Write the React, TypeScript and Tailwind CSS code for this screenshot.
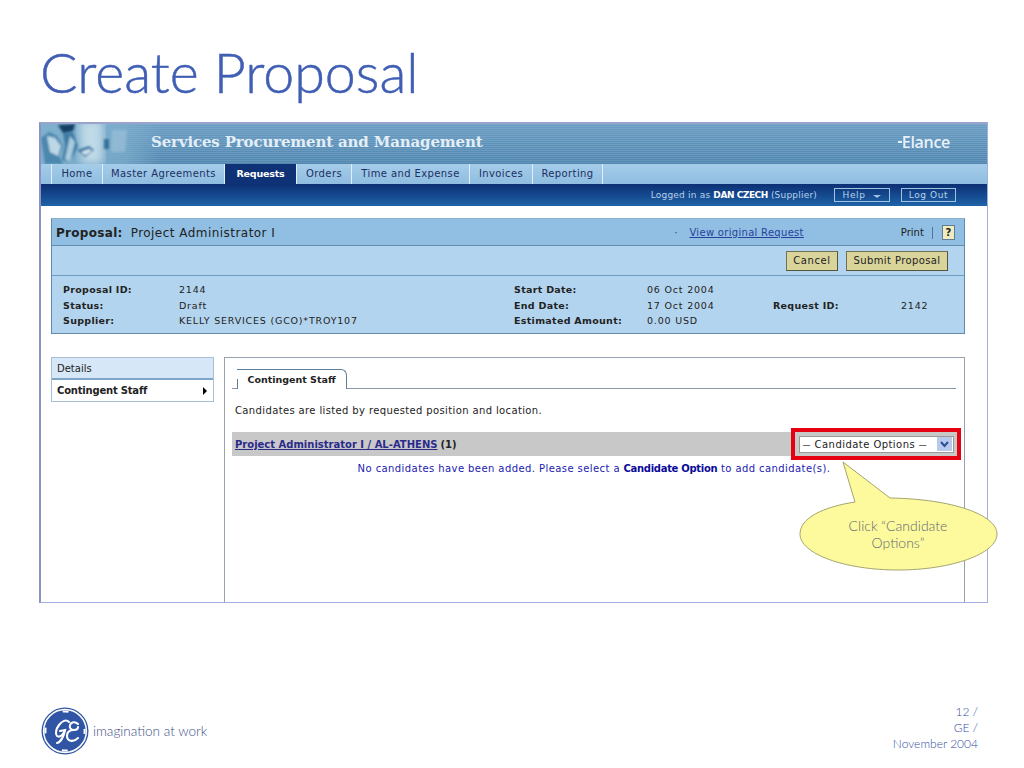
const verdana = "font-['DejaVu_Sans',sans-serif]";

const tabs = [
  { label: "Home", width: "w-[51px]" },
  { label: "Master Agreements", width: "w-[122px]" },
  { label: "Requests", width: "w-[72px]", active: true },
  { label: "Orders", width: "w-[55px]" },
  { label: "Time and Expense", width: "w-[118px]" },
  { label: "Invoices", width: "w-[63px]" },
  { label: "Reporting", width: "w-[70px]" },
];

const BannerPhoto = () => (
  <svg className="absolute left-0 top-0" width="120" height="40" viewBox="0 0 120 40">
    <defs>
      <filter id="soft">
        <feGaussianBlur stdDeviation="1" />
      </filter>
      <filter id="softer">
        <feGaussianBlur stdDeviation="4" />
      </filter>
      <linearGradient id="fade" x1="0" x2="1" y1="0" y2="0">
        <stop offset="0" stopColor="#7fb0cd" />
        <stop offset="0.7" stopColor="#7fb0cd" stopOpacity="0.7" />
        <stop offset="1" stopColor="#7fb0cd" stopOpacity="0" />
      </linearGradient>
    </defs>
    <rect width="120" height="40" fill="url(#fade)" />
    <path d="M38 -4h24v44H40z" fill="#c0dae8" filter="url(#softer)" />
    <g filter="url(#soft)">
      <path d="M0 14l8-6 8 4 6 10-4 10 4 8H4z" fill="#3f7da6" opacity="0.8" />
      <path d="M6 12l8 2 6 8-3 10-8-4z" fill="#bcd8e6" />
      <path d="M17 1l17-1-2 7-10 2z" fill="#123f63" />
      <path d="M22 9l10-1 5 14-8 16-8-2 3-14z" fill="#3f7da6" />
      <path d="M29 12l5 6-5 20-5-3z" fill="#a9cbdf" />
      <path d="M36 26l12-4 5 4-9 7z" fill="#3f7da6" />
      <path d="M40 28l8-3 3 2-7 4z" fill="#d5e6f0" />
      <path d="M63 15h5v10h-5z" fill="#34729c" />
      <path d="M71 6h15l-2 22H70z" fill="#a3c5dc" opacity="0.55" />
    </g>
  </svg>
);

const GeLogo = () => (
  <svg width="48" height="48" viewBox="0 0 48 48">
    <circle cx="24" cy="24" r="23.5" fill="#2f55a4" />
    <circle cx="24" cy="24" r="21.4" fill="none" stroke="#fff" strokeWidth="1.5" />
    <circle cx="24" cy="24" r="19.6" fill="none" stroke="#fff" strokeWidth="2" strokeDasharray="6 24.8" strokeDashoffset="3" />
    <g fill="none" stroke="#fff" strokeWidth="2.1" strokeLinecap="round">
      <path d="M28 15C25 12 21 14 18 18C15 22 14 27 16 29C19 31 23 27 24 23L19 24" />
      <path d="M24 23C23 29 20 35 16 36" />
      <path d="M37 17C34 14 30 15 29 18C28 21 30 23 33 23C29 23 26 25 26 29C26 34 32 36 37 31" />
      <path d="M33 23C35 23 37 22 37 20" />
    </g>
  </svg>
);

const Detail = ({ label, value }: { label: string; value: string }) => (
  <>
    <span className="font-bold">{label}</span>
    <span className="tracking-[0.8px]">{value}</span>
  </>
);

export default function App() {
  return (
    <div className="relative flex h-[768px] w-[1024px] flex-col overflow-hidden bg-white">
      <h1 className="ml-[40px] mt-[38px] h-[84px] font-['Lato',sans-serif] text-[55.5px] font-light leading-[68px] text-[#3f5eb4] [-webkit-text-stroke:0.5px_#3f5eb4]">
        Create Proposal
      </h1>

      {/* Screenshot frame */}
      <div className={`ml-[39px] flex h-[481px] w-[949px] flex-col border-b border-l-[2px] border-r border-t-[2px] border-[#a3aede] border-l-[#8c93c4] border-t-[#9aa3cc] text-[10px] leading-[14px] text-[#222] ${verdana}`}>
        <div className="relative flex h-[40px] shrink-0 items-center bg-[repeating-linear-gradient(180deg,rgba(255,255,255,0.12)_0px,rgba(255,255,255,0.12)_1px,transparent_1px,transparent_2px),linear-gradient(180deg,#6a9dc3,#4f86b0)] pb-[5px]">
          <BannerPhoto />
          <span className="relative ml-[110px] font-['DejaVu_Serif',serif] text-[15px] font-bold tracking-[-0.15px] text-[#e3eef6]">
            Services Procurement and Management
          </span>
          <span className="relative ml-auto mr-[37px] flex items-center font-['Open_Sans',sans-serif] text-[16px] font-semibold tracking-[-0.3px] text-[#e8f1f8]">
            <span className="h-[2px] w-[4px] bg-[#e8f1f8]" />
            Elance
          </span>
        </div>

        <div className="flex h-[20px] shrink-0 bg-gradient-to-b from-[#a5cdea] to-[#8fbce0] pl-[10px] text-[#1c2f63]">
          {tabs.map((tab) => (
            <div
              key={tab.label}
              className={`flex items-center justify-center border-l border-[#e2eef7] ${tab.width} ${
                tab.active ? "bg-[#0f3277] text-[9.5px] font-bold tracking-[-0.2px] text-white" : "tracking-[0.4px]"
              }`}
            >
              {tab.label}
            </div>
          ))}
          <div className="border-l border-[#e2eef7]" />
        </div>

        <div className="flex h-[22px] shrink-0 items-center justify-end bg-gradient-to-b from-[#0d2f74] to-[#1f63a8] pr-[31px] text-[9px] tracking-[0.2px] text-[#b9d3ea]">
          <span>
            Logged in as <b className="tracking-[-0.45px] text-white">DAN CZECH</b> (Supplier)
          </span>
          <span className="ml-[17px] flex h-[14px] w-[56px] items-center justify-center gap-[8px] border border-[#9fc2e0] tracking-[0.6px]">
            Help <span className="mt-[2px] border-x-[4px] border-t-[3px] border-x-transparent border-t-[#9fc2e0]" />
          </span>
          <span className="ml-[11px] flex h-[14px] w-[55px] items-center justify-center border border-[#9fc2e0] tracking-[0.6px]">
            Log Out
          </span>
        </div>

        {/* Proposal panel */}
        <div className="ml-[10px] mt-[12px] h-[116px] w-[914px] shrink-0 border border-[#5f8bae] border-t-[#8fb0c9] bg-[#b3d4ef]">
          <div className="flex h-[27px] items-center whitespace-nowrap border-b border-[#5f8bae] bg-[#90bfe3] pl-[4px] pt-[1px] text-[12px]">
            <b className="tracking-[0.3px]">Proposal:</b>
            <span className="ml-[8px] tracking-[0.46px]">Project Administrator I</span>
            <span className="ml-[399px] text-[10px] text-[#1a3a7a]">·</span>
            <a className="ml-[12px] text-[10px] tracking-[0.3px] text-[#2a3f9a] underline">View original Request</a>
            <span className="ml-[97px] text-[10px]">Print</span>
            <span className="mx-[8px] h-[12px] border-l border-[#4f7696]" />
            <span className="ml-[1px] flex h-[15px] w-[13px] items-center justify-center border border-[#5f7f98] bg-[#f0ecc0] text-[10px] font-bold">?</span>
          </div>
          <div className="flex h-[30px] items-center justify-end gap-[8px] border-b border-[#6f9cc0] pr-[16px]">
            <button className="h-[20px] w-[52px] border border-[#70705a] border-r-[#55553f] border-b-[#55553f] bg-[#d9d49a] text-[10px] tracking-[0.6px]">Cancel</button>
            <button className="h-[20px] w-[102px] border border-[#70705a] border-r-[#55553f] border-b-[#55553f] bg-[#d9d49a] text-[10px] tracking-[0.4px]">Submit Proposal</button>
          </div>
          <div className="grid grid-cols-[116px_335px_133px_126px_128px_1fr] pl-[11px] pt-[6px] text-[9.5px] leading-[15.5px] tracking-[0.3px]">
            <Detail label="Proposal ID:" value="2144" />
            <Detail label="Start Date:" value="06 Oct 2004" />
            <span />
            <span />
            <Detail label="Status:" value="Draft" />
            <Detail label="End Date:" value="17 Oct 2004" />
            <Detail label="Request ID:" value="2142" />
            <Detail label="Supplier:" value="KELLY SERVICES (GCO)*TROY107" />
            <Detail label="Estimated Amount:" value="0.00 USD" />
          </div>
        </div>

        <div className="ml-[10px] mt-[23px] flex min-h-0 flex-1 gap-[10px]">
          <div className="h-[45px] w-[163px] shrink-0 border border-[#a9bfd3]">
            <div className="flex h-[22px] items-center border-b-2 border-[#7fa6c6] bg-[#d6e8f7] pl-[5px] pt-[1px]">Details</div>
            <div className="flex h-[21px] items-center justify-between pl-[5px] pr-[6px] font-bold tracking-[-0.2px]">
              Contingent Staff
              <span className="border-y-[4px] border-l-[4px] border-y-transparent border-l-black" />
            </div>
          </div>

          <div className="w-[741px] border-x border-t border-[#98a2ae] pl-[7px]">
            <div className="mt-[11px] flex h-[20px] w-[724px] items-end border-b border-[#8a96a5]">
              <div className="relative ml-[5px] flex h-[20px] w-[110px] translate-y-[1px] items-center justify-center rounded-tr-[6px] border-r border-t border-[#5f7f98] bg-white pt-[1px] text-[9.5px] font-bold">
                <span className="absolute bottom-0 left-0 h-[10px] border-l border-[#5f7f98]" />
                Contingent Staff
              </div>
            </div>
            <p className="ml-[3px] mt-[15px] tracking-[0.37px]">Candidates are listed by requested position and location.</p>
            <div className="mt-[14px] flex h-[24px] w-[560px] items-center bg-[#c8c8c8] pl-[3px] pt-[1px]">
              <a className="font-bold text-[#2a2a8c] underline">Project Administrator I / AL-ATHENS</a>
              <b className="ml-[3px]">(1)</b>
            </div>
            <p className="mr-[8px] mt-[6px] text-center tracking-[0.42px] text-[#1a1ab0]">
              No candidates have been added. Please select a <b className="tracking-[-0.3px] text-[#0b0b9a]">Candidate Option</b> to add candidate(s).
            </p>
          </div>
        </div>
      </div>

      {/* Highlighted dropdown and callout sit over the screenshot */}
      <div className={`absolute left-[791px] top-[428px] flex h-[32px] w-[170px] items-center justify-center border-[4px] border-[#e50012] bg-[#c8c8c8] text-[10px] ${verdana}`}>
        <div className="flex h-[17px] w-[155px] items-center justify-between whitespace-nowrap border border-[#9a9a9a] bg-white pl-[3px] pr-[1px] tracking-[0.45px] text-[#222]">
          <span>
            <span className="text-[8px]">—</span> Candidate Options <span className="text-[8px]">—</span>
          </span>
          <span className="flex h-[14px] w-[15px] items-center justify-center bg-[#b9c9ee]">
            <svg width="9" height="7" viewBox="0 0 9 7"><path d="M1 1l3.5 4L8 1" fill="none" stroke="#2b4f96" strokeWidth="2" /></svg>
          </span>
        </div>
      </div>

      <svg className="absolute left-[795px] top-[458px]" width="208" height="116" viewBox="0 0 208 116">
        <path
          d="M48 4L60 44C28 49 5 60 5 76c0 20 45 36 98 36s99-16 99-36c0-19-44-35-107-36z"
          fill="#fcfa9c"
          stroke="#a5a56e"
        />
      </svg>
      <div className="absolute left-[838px] top-[517px] w-[120px] text-center font-['Lato',sans-serif] text-[14px] font-light leading-[17px] text-[#5f6875]">
        Click “Candidate Options”
      </div>

      {/* Footer */}
      <div className="mt-auto flex h-[66px] items-center justify-between pb-[8px] pl-[41px] pr-[46px]">
        <div className="flex items-center gap-[4px]">
          <GeLogo />
          <span className="font-['Lato',sans-serif] text-[13.5px] font-light text-[#3a4f88]">imagination at work</span>
        </div>
        <div className="-mt-[6px] text-right font-['Lato',sans-serif] text-[12px] font-light leading-[16px] text-[#34519f]">
          12 /<br />GE /<br />November 2004
        </div>
      </div>
    </div>
  );
}
